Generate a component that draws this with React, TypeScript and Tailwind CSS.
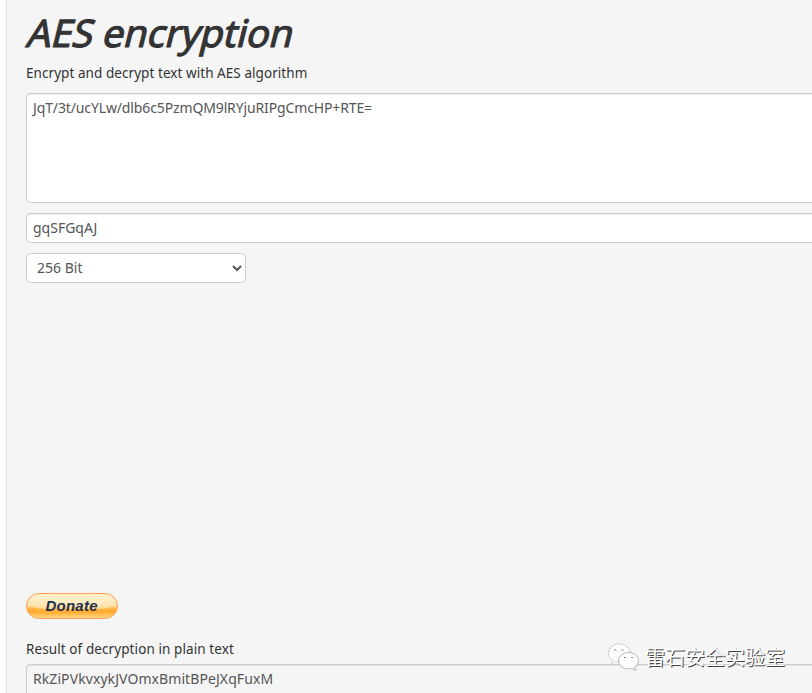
const field =
  "block w-full shrink-0 resize-none overflow-hidden rounded-[4px] border border-[#cccccc] px-[6px] text-[14px] leading-5 text-[#555555] shadow-[inset_0_1px_1px_rgba(0,0,0,0.075)] outline-none";

function DonateButton() {
  return (
    <button type="button" className="block h-[26px] w-[92px]" aria-label="Donate">
      <svg width="92" height="26" viewBox="0 0 92 26">
        <defs>
          <linearGradient id="pill" x1="0" y1="0" x2="0" y2="1">
            <stop offset="0" stopColor="#ffeec4" />
            <stop offset="0.3" stopColor="#ffe6b2" />
            <stop offset="0.5" stopColor="#ffd88c" />
            <stop offset="0.62" stopColor="#ffb13c" />
            <stop offset="0.75" stopColor="#ffac30" />
            <stop offset="1" stopColor="#ffdc90" />
          </linearGradient>
        </defs>
        <rect x="0.5" y="0.5" width="91" height="25" rx="12.5" fill="url(#pill)" stroke="#ff9d58" />
        <path d="M2 14 C2 6 7 2 14 2 H78 C85 2 90 6 90 14 C87 11 84 16 76 16 H16 C8 16 5 11 2 14Z" fill="#fff4d8" opacity="0.45" />
        <text x="19.5" y="18" textLength="52" className="fill-[#20304f] font-['Liberation_Sans',sans-serif] text-[15px] font-bold italic">
          Donate
        </text>
      </svg>
    </button>
  );
}

function Watermark() {
  return (
    <div className="absolute left-[607px] top-[641px] flex items-center">
      <svg width="33" height="30" viewBox="0 0 33 30" fill="#fff" stroke="#888" strokeWidth="0.6">
        <path d="M12 2C6 2 1.500 6 1.500 11c0 3 1.500 5.500 4 7l-1 4 4-2.500c1 .4 2.500.5 4 .5 6 0 10.500-4 10.500-9S18 2 12 2Z" strokeDasharray="1.500 1" />
        <path d="M21.500 10.500c-5.500 0-10 3.600-10 8.200s4.500 8.200 10 8.200c1.300 0 2.500-.2 3.600-.6l3.400 2.200-.9-3.300c2.300-1.500 3.900-3.800 3.900-6.500 0-4.600-4.500-8.200-10-8.200Z" />
        <g fill="none" stroke="#777" strokeWidth="0.9">
          <path d="M7 8.500q1-2 2.300 0M14.500 8.500q1-2 2.300 0M17 16q1-2 2 0M24 16q1-2 2 0" />
        </g>
      </svg>
      <span className="ml-[5px] whitespace-nowrap pt-px font-['Noto_Sans_CJK_SC',sans-serif] text-[20px] leading-[30px] text-white [text-shadow:1px_1px_0_#444]">
        雷石安全实验室
      </span>
    </div>
  );
}

export default function App() {
  return (
    <div className="relative h-[693px] w-[812px] overflow-hidden bg-white pl-[6px] font-['Noto_Sans',sans-serif]">
      <main className="flex h-full w-[900px] flex-col border-l border-[#e3e3e3] bg-[#f5f5f5] pl-[19px] pt-[12px] text-[14px] leading-5 text-[#333333]">
        <h1 className="-ml-[2px] h-[51px] shrink-0 whitespace-nowrap text-[38px] leading-[40px]">
          <span className="inline-block origin-bottom-left -skew-x-[14deg] tracking-[-0.15px] [-webkit-text-stroke:1.1px_#333333]">
            AES encryption
          </span>
        </h1>
        <p className="mb-[10px] shrink-0 whitespace-nowrap text-[13.500px] tracking-[0.06px]">
          Encrypt and decrypt text with AES algorithm
        </p>
        <textarea readOnly className={`${field} mb-[10px] h-[110px] bg-white pt-[4px] tracking-[-0.13px]`} value="JqT/3t/ucYLw/dlb6c5PzmQM9lRYjuRIPgCmcHP+RTE=" />
        <input readOnly className={`${field} mb-[10px] h-[30px] bg-white pb-[5px] pt-[3px]`} value="gqSFGqAJ" />
        <select className="h-[30px] w-[220px] shrink-0 rounded-[4px] border border-[#cccccc] bg-white pb-[5px] pl-[6px] pr-[4px] pt-[3px] text-[14px] leading-5 text-[#555555] outline-none">
          <option>256 Bit</option>
        </select>
        <div className="mt-[310px] shrink-0">
          <DonateButton />
        </div>
        <p className="mb-[5px] mt-[20px] shrink-0 whitespace-nowrap text-[13.500px] tracking-[0.09px]">
          Result of decryption in plain text
        </p>
        <textarea readOnly className={`${field} h-[110px] bg-[#f5f5f5] pt-[4px] tracking-[0.08px]`} value="RkZiPVkvxykJVOmxBmitBPeJXqFuxM" />
      </main>
      <Watermark />
    </div>
  );
}
